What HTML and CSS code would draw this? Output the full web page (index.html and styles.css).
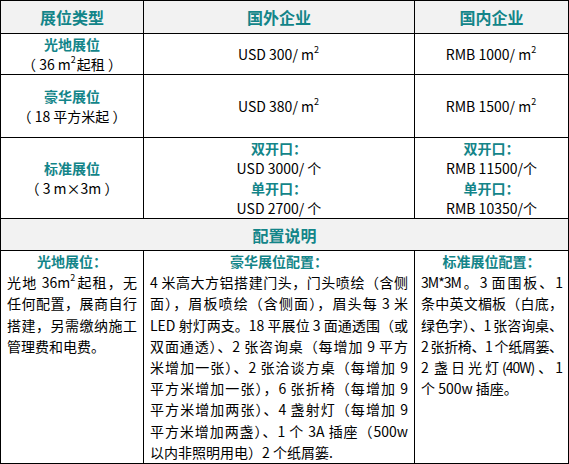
FILE: index.html
```html
<!DOCTYPE html>
<html lang="zh-CN">
<head>
<meta charset="utf-8">
<link rel="stylesheet" href="styles.css">
</head>
<body>
<table class="booth">
  <colgroup>
    <col class="c1">
    <col class="c2">
    <col class="c3">
  </colgroup>
  <tr class="r-head">
    <th>展位类型</th>
    <th>国外企业</th>
    <th>国内企业</th>
  </tr>
  <tr class="r1">
    <td class="type"><div class="tt">光地展位</div><div>（ 36 m<sup>2</sup>起租 ）</div></td>
    <td class="price">USD 300/ m<sup>2</sup></td>
    <td class="price">RMB 1000/ m<sup>2</sup></td>
  </tr>
  <tr class="r2">
    <td class="type"><div class="tt">豪华展位</div><div>（ 18 平方米起 ）</div></td>
    <td class="price">USD 380/ m<sup>2</sup></td>
    <td class="price">RMB 1500/ m<sup>2</sup></td>
  </tr>
  <tr class="r3">
    <td class="type"><div class="tt">标准展位</div><div>（ 3 m×3m ）</div></td>
    <td class="price"><div class="tt">双开口：</div><div>USD 3000/ 个</div><div class="tt">单开口：</div><div>USD 2700/ 个</div></td>
    <td class="price"><div class="tt">双开口：</div><div>RMB 11500/个</div><div class="tt">单开口：</div><div>RMB 10350/个</div></td>
  </tr>
  <tr class="r-cfg">
    <th colspan="3">配置说明</th>
  </tr>
  <tr class="r-desc">
    <td class="desc">
      <div class="dt">光地展位：</div>
      <div class="ln">光地 36m<sup>2</sup>起租，无</div>
      <div class="ln">任何配置，展商自行</div>
      <div class="ln">搭建，另需缴纳施工</div>
      <div class="last">管理费和电费。</div>
    </td>
    <td class="desc">
      <div class="dt">豪华展位配置：</div>
      <div class="ln">4 米高大方铝搭建门头，门头喷绘（含侧</div>
      <div class="ln">面），眉板喷绘（含侧面），眉头每 3 米</div>
      <div class="ln">LED 射灯两支。18 平展位 3 面通透围（或</div>
      <div class="ln">双面通透）、2 张咨询桌（每增加 9 平方</div>
      <div class="ln">米增加一张）、2 张洽谈方桌（每增加 9</div>
      <div class="ln">平方米增加一张），6 张折椅（每增加 9</div>
      <div class="ln">平方米增加两张）、4 盏射灯（每增加 9</div>
      <div class="ln">平方米增加两盏）、1 个 3A 插座（500w</div>
      <div class="last">以内非照明用电）2 个纸屑篓.</div>
    </td>
    <td class="desc narrow">
      <div class="dt">标准展位配置：</div>
      <div class="ln">3M*3M。3 面围板、1</div>
      <div class="ln">条中英文楣板（白底，</div>
      <div class="ln">绿色字）、1 张咨询桌、</div>
      <div class="ln">2 张折椅、1 个纸屑篓、</div>
      <div class="ln">2 盏日光灯(40W)、1</div>
      <div class="last">个 500w 插座。</div>
    </td>
  </tr>
</table>
</body>
</html>
```

FILE: styles.css
```css
html, body {
  margin: 0;
  padding: 0;
  background: #ffffff;
}
body {
  font-family: "Noto Sans CJK SC", "Noto Sans", sans-serif;
  font-size: 14px;
  color: #000;
}
.booth {
  border-collapse: collapse;
  table-layout: fixed;
  width: 568px;
}
.c1 { width: 143px; }
.c2 { width: 271px; }
.c3 { width: 154px; }
.booth th, .booth td {
  border: 1px solid #000;
  padding: 0 6px;
}
.booth th {
  background: #f2f2f2;
  color: #138589;
  font-size: 16px;
  font-weight: bold;
  text-align: center;
  line-height: 20px;
}
.r-head { height: 33px; }
.r1 { height: 40px; }
.r2 { height: 63px; }
.r3 { height: 81px; }
.r-cfg { height: 32px; }
.type, .price {
  text-align: center;
  vertical-align: middle;
  line-height: 20px;
}
.tt {
  color: #138589;
  font-weight: bold;
}
sup {
  font-size: 9px;
  line-height: 0;
  vertical-align: 7px;
  margin: 0 1px 0 0;
}
.desc {
  vertical-align: top;
  line-height: 21.2px;
  padding-top: 1px;
  padding-bottom: 2px;
}
.narrow {
  padding-left: 6px;
  padding-right: 5px;
}
.narrow .ln {
  letter-spacing: -1px;
}
.dt {
  color: #138589;
  font-weight: bold;
  text-align: center;
}
.ln {
  white-space: nowrap;
  text-align: justify;
  text-align-last: justify;
}
.last {
  white-space: nowrap;
}
```
